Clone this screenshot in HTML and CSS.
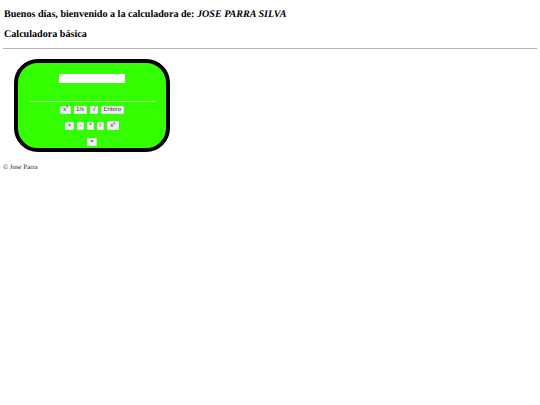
FILE: index.html
```html
<!DOCTYPE html>
<html lang="es">
<head>
    <meta charset="UTF-8">
    <title>Calculadora</title>
    <link rel="stylesheet" href="styles.css">
</head>
<body>
    <h1 class="greeting">Buenos días, bienvenido a la calculadora de: <em>JOSE PARRA SILVA</em></h1>
    <h2 class="title">Calculadora básica</h2>
    <hr class="page-rule">

    <div class="calc">
        <input class="display" type="text">
        <hr class="calc-rule">
        <div class="row">
            <button>x<sup>2</sup></button>
            <button>1/x</button>
            <button>√</button>
            <button>Entero</button>
        </div>
        <div class="row row-ops">
            <button>+</button>
            <button>-</button>
            <button>*</button>
            <button>/</button>
            <button class="btn-tall">x<sup>y</sup></button>
        </div>
        <div class="row row-eq">
            <button class="btn-eq">=</button>
        </div>
    </div>

    <p class="footer">© Jose Parra</p>
</body>
</html>
```

FILE: styles.css
```css
body {
    margin: 0;
    padding: 0 3px;
    font-family: "Liberation Serif", "Times New Roman", serif;
    color: black;
    background: white;
    text-rendering: geometricPrecision;
}

.greeting {
    margin: 0;
    padding: 8px 0 0 1px;
    font-size: 10.1px;
    line-height: 13px;
}

.title {
    margin: 0;
    padding: 7px 0 0 1px;
    font-size: 10.1px;
    line-height: 13px;
}

.page-rule {
    margin: 7px 0 0;
    border: 0;
    height: 1px;
    background: #b4b4b4;
}

.calc {
    box-sizing: border-box;
    width: 156px;
    height: 93px;
    margin: 10px 0 0 11px;
    padding: 11px 11px 0;
    border: 4px solid black;
    border-radius: 24px;
    background: #33ff00;
    display: flex;
    flex-direction: column;
    align-items: center;
}

.display {
    box-sizing: border-box;
    width: 66px;
    height: 9px;
    margin: 0;
    padding: 0;
    border: 0;
    background: white;
    display: block;
}

.calc-rule {
    width: 100%;
    margin: 18px 0 0;
    border: 0;
    height: 1px;
    background: #a6f590;
}

.row {
    display: flex;
    justify-content: center;
    align-items: flex-end;
    gap: 3px;
    margin-top: 4px;
}

.row-ops {
    margin-top: 7px;
}

.row-eq {
    margin-top: 8px;
}

button {
    box-sizing: border-box;
    height: 8px;
    margin: 0;
    padding: 0 1.5px;
    border: 1px solid #e0e0e0;
    border-radius: 1px;
    background: #efefef;
    color: #333;
    font-family: "Liberation Sans", Arial, sans-serif;
    font-size: 6px;
    line-height: 6px;
    text-rendering: geometricPrecision;
}

button sup {
    font-size: 4px;
    line-height: 0;
}

.btn-tall {
    height: 9px;
    padding: 0 2.5px;
}

.btn-eq {
    width: 10px;
}

.footer {
    margin: 12px 0 0;
    font-size: 6.8px;
    line-height: 8px;
    color: #222;
}
```
